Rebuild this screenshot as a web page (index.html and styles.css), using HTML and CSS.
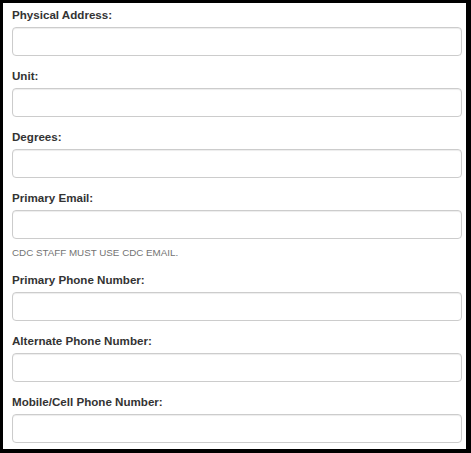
FILE: index.html
```html
<!DOCTYPE html>
<html>
<head>
<meta charset="utf-8">
<link rel="stylesheet" href="styles.css">
</head>
<body>
<div class="panel">
  <form class="form">
    <div class="group">
      <label class="label">Physical Address:</label>
      <input class="control" type="text">
    </div>
    <div class="group">
      <label class="label">Unit:</label>
      <input class="control" type="text">
    </div>
    <div class="group">
      <label class="label">Degrees:</label>
      <input class="control" type="text">
    </div>
    <div class="group">
      <label class="label">Primary Email:</label>
      <input class="control" type="text">
      <span class="help">CDC STAFF MUST USE CDC EMAIL.</span>
    </div>
    <div class="group">
      <label class="label">Primary Phone Number:</label>
      <input class="control" type="text">
    </div>
    <div class="group">
      <label class="label">Alternate Phone Number:</label>
      <input class="control" type="text">
    </div>
    <div class="group">
      <label class="label">Mobile/Cell Phone Number:</label>
      <input class="control" type="text">
    </div>
  </form>
</div>
</body>
</html>
```

FILE: styles.css
```css
html, body {
  margin: 0;
  padding: 0;
  background: #000;
}
body {
  width: 471px;
  height: 453px;
  overflow: hidden;
  font-family: "Liberation Sans", Arial, sans-serif;
}
.panel {
  margin: 3px 5px 4px 3px;
  height: 446px;
  background: #fff;
  overflow: hidden;
  box-sizing: border-box;
  padding: 3px 4px 0 9px;
}
.form {
  display: flex;
  flex-direction: column;
  gap: 11px;
}
.group {
  display: flex;
  flex-direction: column;
}
.label {
  font-size: 11.6px;
  line-height: 17px;
  font-weight: bold;
  color: #333;
  margin-bottom: 4px;
}
.control {
  box-sizing: border-box;
  display: block;
  width: 100%;
  height: 29px;
  margin: 0;
  padding: 4px 8px;
  border: 1px solid #ccc;
  border-radius: 4px;
  background: #fff;
  font-family: inherit;
  font-size: 12px;
  box-shadow: inset 0 1px 1px rgba(0,0,0,0.075);
}
.help {
  display: block;
  margin-top: 6px;
  font-size: 9.8px;
  line-height: 15px;
  color: #737373;
  text-transform: uppercase;
}
```
